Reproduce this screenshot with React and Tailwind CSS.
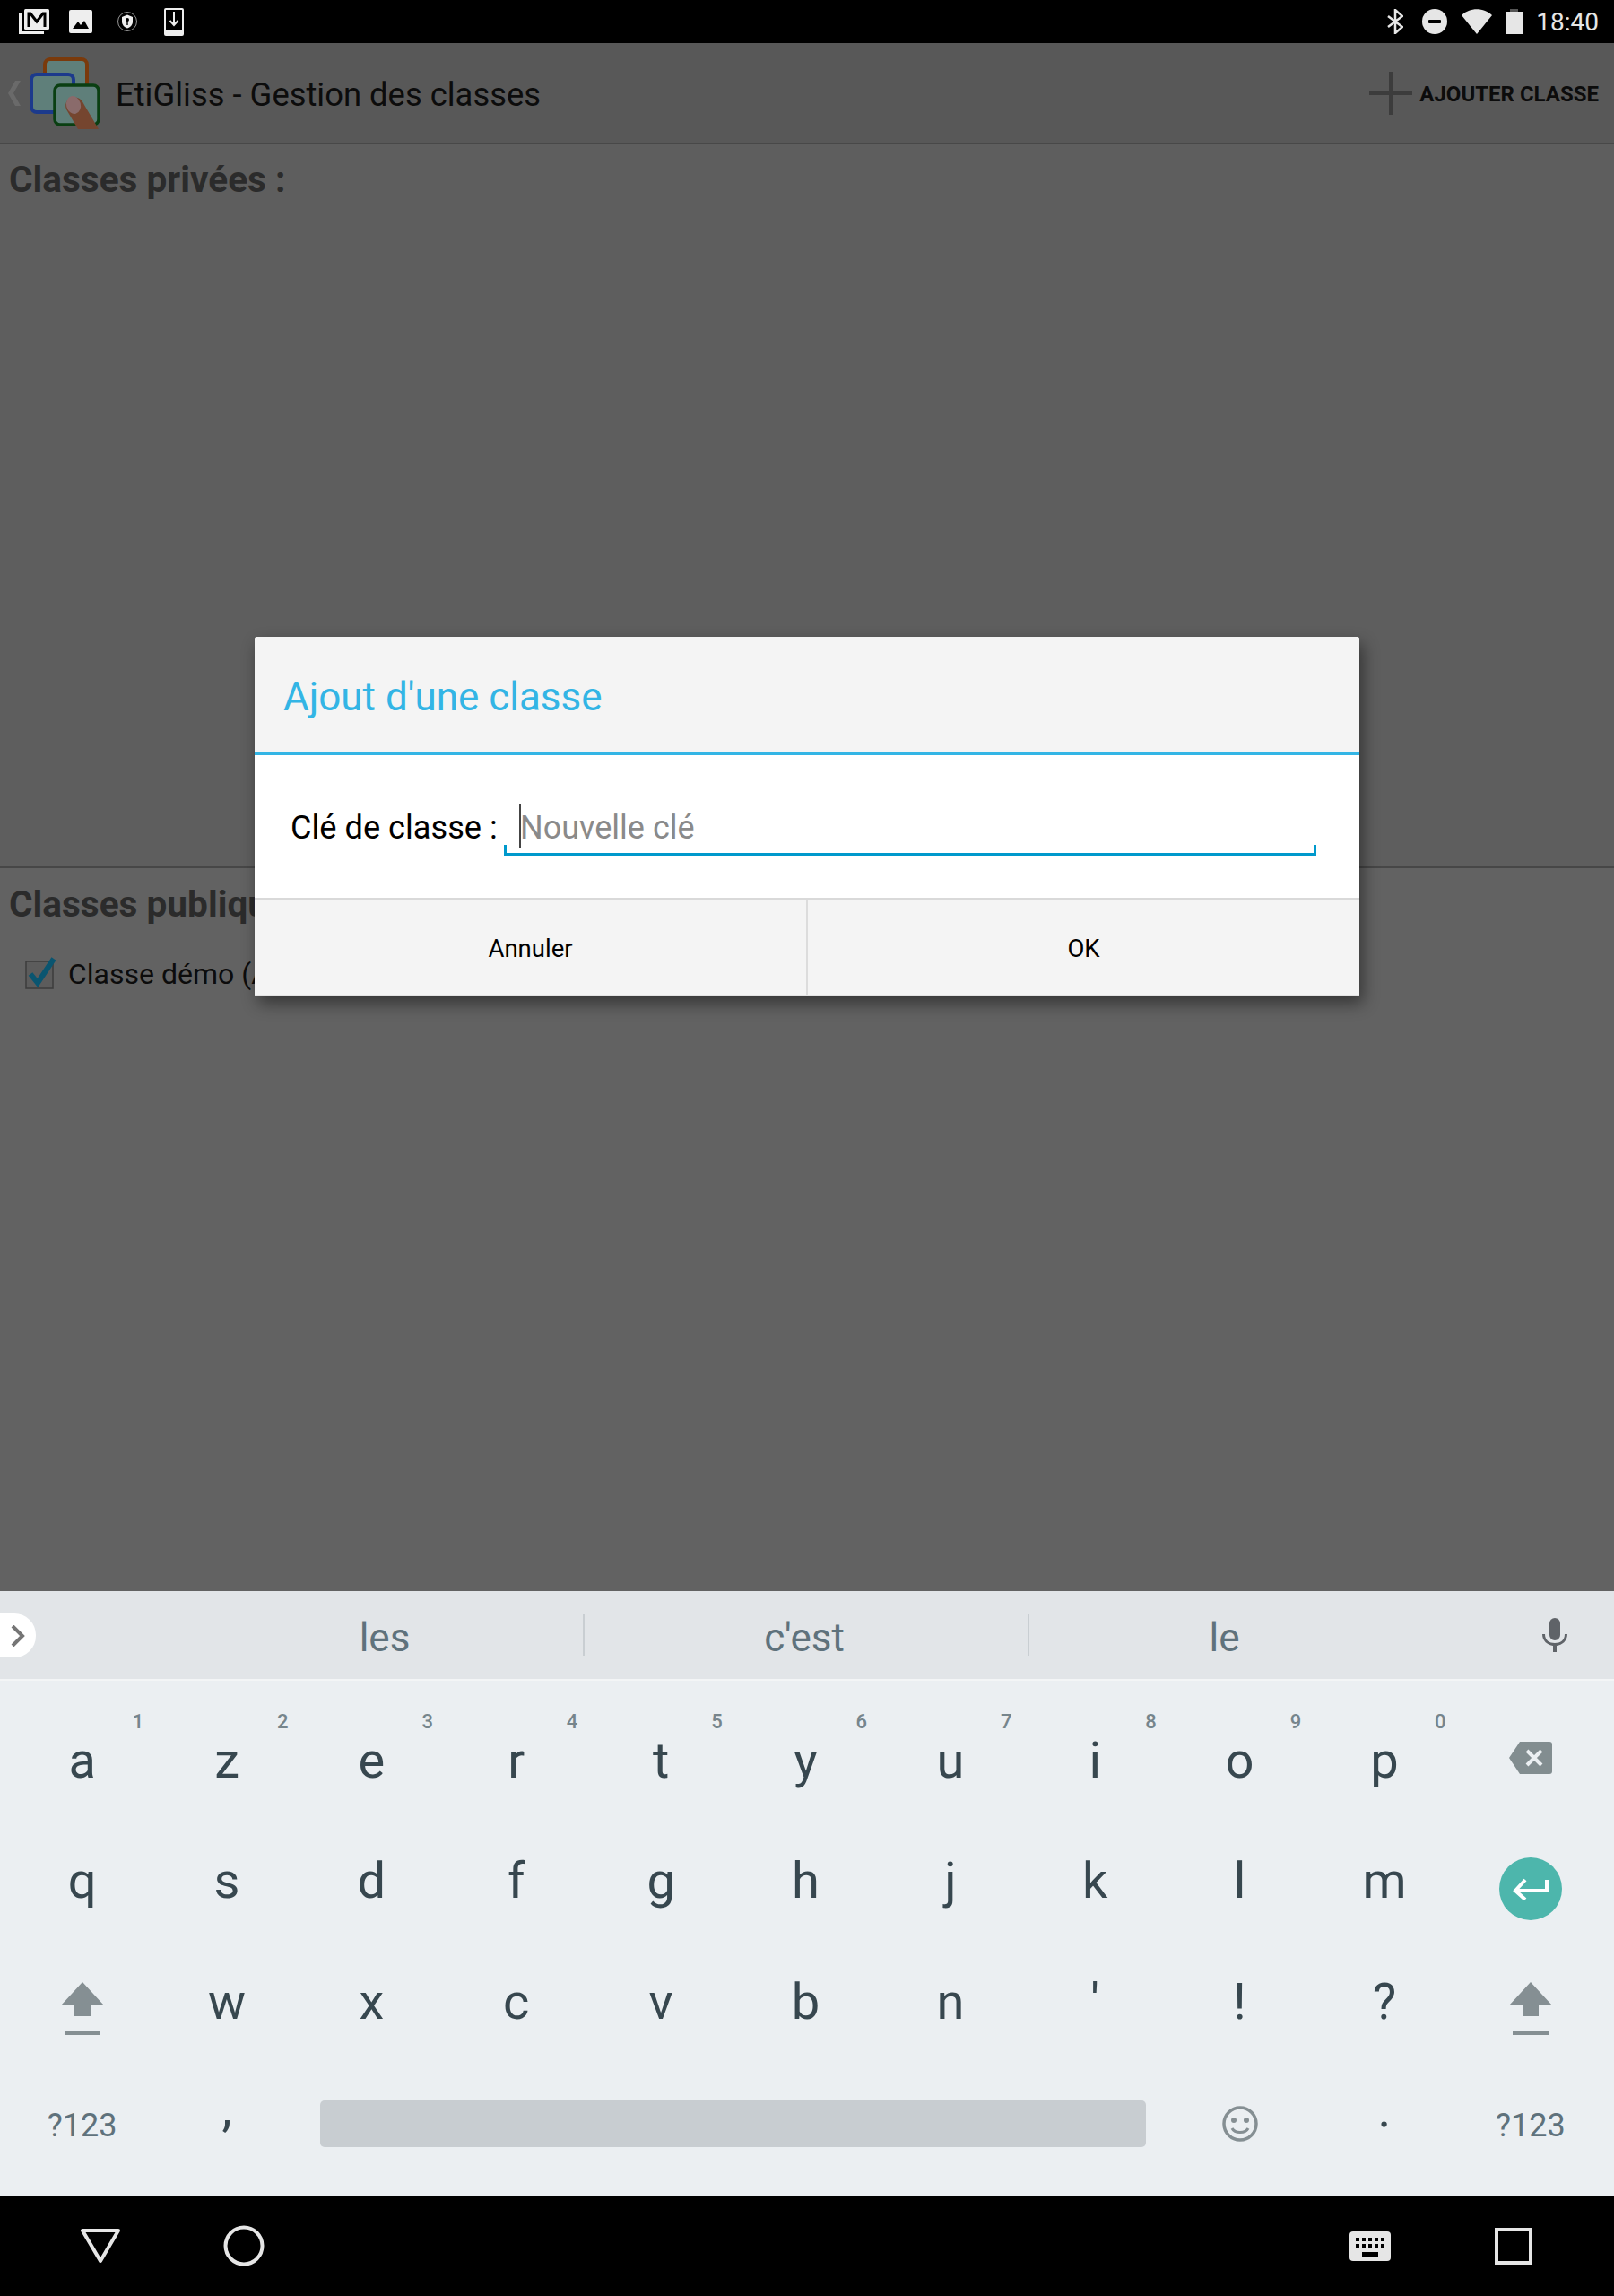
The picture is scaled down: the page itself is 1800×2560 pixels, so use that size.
import React from "react";

const rowOne = [
  ["a", "1"], ["z", "2"], ["e", "3"], ["r", "4"], ["t", "5"],
  ["y", "6"], ["u", "7"], ["i", "8"], ["o", "9"], ["p", "0"],
];
const rowTwo = ["q", "s", "d", "f", "g", "h", "j", "k", "l", "m"];
const rowThree = ["w", "x", "c", "v", "b", "n", "'", "!", "?"];

const Logo = () => (
  <svg width="80" height="80" viewBox="0 0 80 80" className="ml-[9px] mt-[16px] shrink-0">
    <rect x="18" y="2" width="47" height="50" rx="6" fill="#5f7f7a" stroke="#7a3a0c" strokeWidth="4" />
    <rect x="3" y="19" width="47" height="42" rx="6" fill="#5f7f7a" stroke="#1c3a8c" strokeWidth="4" />
    <rect x="29" y="31" width="49" height="44" rx="6" fill="#5f7f7a" stroke="#0a3f12" strokeWidth="3.500" />
    <path d="M42 58 C38 47 50 40 58 47 C60 49 61 51 62 53 L78 80 L55 80 Z" fill="#75452f" />
    <ellipse cx="50" cy="53" rx="8" ry="10" fill="#8a6b6b" transform="rotate(-15 50 53)" />
  </svg>
);

const Shift = () => (
  <svg width="48" height="60" viewBox="0 0 48 60" className="mt-[18px]" fill="#858f93">
    <path d="M24 0 L48 26 L33 26 L33 38 L15 38 L15 26 L0 26 Z" />
    <rect x="4" y="54" width="40" height="5" />
  </svg>
);

const KeyBox = ({ children, hint, className = "" }) => (
  <div className={`relative flex items-center justify-center ${className}`}>
    {children}
    {hint && (
      <span className="absolute left-[133px] top-[11px] w-5 text-center text-[22px] font-medium leading-[26px] text-[#76858c]">
        {hint}
      </span>
    )}
  </div>
);

const Letter = ({ children, className = "" }) => (
  <span className={`text-[56px] leading-none text-[#37474f] ${className}`}>{children}</span>
);

export default function App() {
  return (
    <div className="w-[1800px] h-[2560px] flex flex-col overflow-hidden bg-black font-['Roboto',sans-serif]">
      {/* Status bar */}
      <div className="h-12 shrink-0 bg-black flex items-center justify-between">
        <div className="flex items-center pl-[21px]">
          <svg width="34" height="28" viewBox="0 0 34 28" fill="none">
            <path d="M1.5 5 V26.5 H28" stroke="#eee" strokeWidth="3" />
            <rect x="6" y="0" width="28" height="23" rx="1.5" fill="#eee" />
            <path d="M11 20 V5 H13 L20 14 L27 5 H29 V20" stroke="#000" strokeWidth="3" fill="none" />
          </svg>
          <svg width="26" height="26" viewBox="0 0 26 26" className="ml-[22px]">
            <rect width="26" height="26" rx="2" fill="#eee" />
            <path d="M4 21 L10 13 L13 17 L17 12 L22 21 Z" fill="#000" />
          </svg>
          <svg width="22" height="22" viewBox="0 0 22 22" fill="none" className="ml-[28px]">
            <circle cx="11" cy="11" r="10.500" stroke="#bbb" strokeWidth="0.800" />
            <path d="M11 3.5 L17 6 V11 C17 15 14 17.5 11 18.500 C8 17.5 5 15 5 11 V6 Z" fill="#eee" />
            <circle cx="11" cy="9" r="2" fill="#000" />
            <rect x="10.3" y="10" width="1.400" height="5" fill="#000" />
          </svg>
          <svg width="22" height="31" viewBox="0 0 22 31" fill="none" className="ml-[30px]">
            <rect x="1" y="1" width="20" height="29" rx="1" stroke="#eee" strokeWidth="2" />
            <rect x="1" y="24" width="20" height="6" fill="#eee" />
            <path d="M11 4 V18 M6.5 14 L11 19 L15.500 14" stroke="#eee" strokeWidth="2" />
          </svg>
        </div>
        <div className="flex items-center pr-[17px] text-[#e6e6e6]">
          <svg width="18" height="28" viewBox="0 0 18 28" fill="none" stroke="#e6e6e6" strokeWidth="2.500">
            <path d="M1 8 L17 20 L9 27 V1 L17 8 L1 20" />
          </svg>
          <svg width="28" height="28" viewBox="0 0 28 28" className="ml-[21px]">
            <circle cx="14" cy="14" r="14" fill="#e6e6e6" />
            <rect x="7" y="12" width="14" height="4" rx="1" fill="#000" />
          </svg>
          <svg width="34" height="28" viewBox="0 0 34 28" className="ml-[16px]">
            <path d="M0 7 C9 -2 25 -2 34 7 L17 28 Z" fill="#e6e6e6" />
          </svg>
          <svg width="19" height="28" viewBox="0 0 19 28" className="ml-[15px]">
            <rect x="5" y="0" width="9" height="4" fill="#555" />
            <rect x="0" y="3" width="19" height="25" fill="#e6e6e6" />
          </svg>
          <span className="ml-[15px] mt-[2px] text-[28px] leading-none">18:40</span>
        </div>
      </div>

      {/* App behind the dimmed overlay */}
      <div className="relative h-[1726px] shrink-0 flex flex-col bg-[#626262]">
        <div className="h-[113px] shrink-0 bg-[#585858] border-b-2 border-[#484848] flex items-start">
          <svg width="14" height="28" viewBox="0 0 14 28" className="ml-[9px] mt-[42px] shrink-0" fill="#6a6a6a">
            <path d="M14 0 L6 14 L14 28 L8 28 L0 14 L8 0 Z" />
          </svg>
          <Logo />
          <span className="ml-[17px] mt-[35px] text-[36.4px] leading-[46px] text-[#0c0c0c]">
            EtiGliss - Gestion des classes
          </span>
          <div className="ml-auto flex items-center pr-[17px] h-[112px]">
            <svg width="48" height="48" viewBox="0 0 48 48" fill="#3c3c3c">
              <rect x="22" y="0" width="4" height="48" />
              <rect x="0" y="22" width="48" height="4" />
            </svg>
            <span className="ml-2 mt-[1px] text-[24px] font-bold leading-none text-[#0c0c0c]">AJOUTER CLASSE</span>
          </div>
        </div>

        <div className="h-[807px] shrink-0 border-b-2 border-[#474747] bg-[#5e5e5e] px-[10px] pt-[15px]">
          <h2 className="text-[40.6px] font-bold leading-[48px] text-[#2b2b2b]">Classes privées :</h2>
        </div>

        <div className="flex-1 px-[10px] pt-4">
          <h2 className="text-[40.6px] font-bold leading-[48px] text-[#2b2b2b]">Classes publiques :</h2>
          <div className="flex items-center mt-[34px] ml-[18px]">
            <svg width="36" height="36" viewBox="0 0 36 36" fill="none" className="shrink-0 -mt-[2px]">
              <rect x="1" y="5" width="30" height="30" stroke="#3c3c3c" strokeWidth="1.500" fill="#5c5c5c" />
              <path d="M6 19 L14 29 L32 2" stroke="#0a5570" strokeWidth="6" />
            </svg>
            <span className="ml-[12px] text-[32px] leading-[40px] text-[#0c0c0c]">Classe démo (Admin)</span>
          </div>
        </div>

        {/* Dialog */}
        <div className="absolute left-[284px] top-[662px] w-[1232px] h-[401px] flex flex-col rounded-[3px] overflow-hidden bg-white shadow-[4px_8px_18px_rgba(0,0,0,0.45)]">
          <div className="h-[128px] shrink-0 bg-[#f4f4f4] pl-8 pt-[41px]">
            <span className="text-[44px] leading-[52px] text-[#33b5e5]">Ajout d'une classe</span>
          </div>
          <div className="h-1 shrink-0 bg-[#33b5e5]" />
          <div className="h-[159px] shrink-0 flex items-start pl-[40px]">
            <span className="w-[238px] shrink-0 mt-[59px] text-[36.2px] leading-[44px] text-black">Clé de classe :</span>
            <div className="relative mt-[103px] w-[906px] h-[9px] border-b-[3px] border-[#0099cc]">
              <div className="absolute left-0 bottom-0 w-[3px] h-[9px] bg-[#0099cc]" />
              <div className="absolute right-0 bottom-0 w-[3px] h-[9px] bg-[#0099cc]" />
              <div className="absolute left-[17px] bottom-[6px] w-[2px] h-[49px] bg-[#444]" />
              <input
                readOnly
                placeholder="Nouvelle clé"
                className="absolute left-[18px] bottom-[6px] w-[600px] h-[44px] bg-transparent outline-none text-[36px] placeholder:text-[#8a8a8a]"
              />
            </div>
          </div>
          <div className="flex-1 flex bg-[#f4f4f4] border-t-2 border-[#d9d9d9] border-b-2 border-b-[#e4e4e4] text-[27.5px] text-black">
            <div className="w-[617px] pt-[4px] flex items-center justify-center border-r-2 border-[#dcdcdc]">Annuler</div>
            <div className="flex-1 pt-[4px] flex items-center justify-center">OK</div>
          </div>
        </div>
      </div>

      {/* Keyboard */}
      <div className="h-[100px] shrink-0 bg-[#e2e5e8] border-b-2 border-[#f3f5f6] flex items-center relative">
        <div className="absolute left-0 top-[25px] w-10 h-[49px] rounded-r-[24px] bg-white flex items-center justify-center">
          <svg width="16" height="24" viewBox="0 0 16 24" fill="none" stroke="#757575" strokeWidth="4">
            <path d="M2 1 L13 12 L2 23" />
          </svg>
        </div>
        <div className="w-[650px] text-center pl-[208px] pt-[6px] text-[44px] leading-none text-[#5f727c]">les</div>
        <div className="w-0.5 h-[46px] bg-[#c9ced2]" />
        <div className="w-[494px] text-center pr-[4px] pt-[6px] text-[44px] leading-none text-[#5f727c]">c'est</div>
        <div className="w-0.5 h-[46px] bg-[#c9ced2]" />
        <div className="w-[438px] text-center pr-[3px] pt-[6px] text-[44px] leading-none text-[#5f727c]">le</div>
        <svg width="28" height="38" viewBox="0 0 28 38" className="ml-[134px]" fill="#5f6368">
          <rect x="8" y="0" width="12" height="25" rx="6" />
          <path d="M0 18 H3 C3 25 8 28 14 28 C20 28 25 25 25 18 H28 C28 26 22 30 16 31 V38 H12 V31 C6 30 0 26 0 18 Z" />
        </svg>
      </div>
      <div className="h-[574px] shrink-0 bg-[#ebeff2] pl-[11px] pr-[14px] pt-[22px]">
        <div className="grid grid-cols-11 auto-rows-[134px]">
          {rowOne.map(([letter, hint]) => (
            <KeyBox key={letter} hint={hint}>
              <Letter>{letter}</Letter>
            </KeyBox>
          ))}
          <KeyBox className="pl-[3px]">
            <svg width="48" height="36" viewBox="0 0 48 36" className="-mt-[6px]">
              <path d="M12 0 H45 A3 3 0 0 1 48 3 V33 A3 3 0 0 1 45 36 H12 L0 18 Z" fill="#828d90" />
              <path d="M20 10 L36 26 M36 10 L20 26" stroke="#ebeff2" strokeWidth="4" />
            </svg>
          </KeyBox>

          {rowTwo.map((letter) => (
            <KeyBox key={letter}>
              <Letter>{letter}</Letter>
            </KeyBox>
          ))}
          <KeyBox className="pl-[3px]">
            <div className="mt-[18px] w-[70px] h-[70px] rounded-full bg-[#4db6ac] flex items-center justify-center">
              <svg width="40" height="26" viewBox="0 0 40 26" fill="none" stroke="#fff" strokeWidth="4">
                <path d="M38 3 V15 H4 M14 3 L3 15 L14 25" />
              </svg>
            </div>
          </KeyBox>

          <KeyBox>
            <Shift />
          </KeyBox>
          {rowThree.map((letter) => (
            <KeyBox key={letter}>
              <Letter className="mt-[2px]">{letter}</Letter>
            </KeyBox>
          ))}
          <KeyBox className="pl-[3px]">
            <Shift />
          </KeyBox>

          <KeyBox>
            <span className="mt-[9px] text-[36px] text-[#5f727c]">?123</span>
          </KeyBox>
          <KeyBox>
            <Letter className="-mt-[28px]">,</Letter>
          </KeyBox>
          <KeyBox className="col-span-6">
            <div className="mt-[6px] w-[921px] h-[52px] rounded-[5px] bg-[#c8cdd1]" />
          </KeyBox>
          <KeyBox>
            <svg width="40" height="40" viewBox="0 0 40 40" fill="none" className="mt-[6px]">
              <circle cx="20" cy="20" r="18" stroke="#858f93" strokeWidth="3.500" />
              <circle cx="13" cy="16" r="3" fill="#858f93" />
              <circle cx="27" cy="16" r="3" fill="#858f93" />
              <path d="M11 25 C14 31 26 31 29 25" stroke="#858f93" strokeWidth="3" />
            </svg>
          </KeyBox>
          <KeyBox>
            <Letter className="-mt-[26px]">.</Letter>
          </KeyBox>
          <KeyBox className="pl-[3px]">
            <span className="mt-[9px] text-[36px] text-[#5f727c]">?123</span>
          </KeyBox>
        </div>
      </div>

      {/* Navigation bar */}
      <div className="h-[112px] shrink-0 bg-black flex items-center">
        <svg width="46" height="40" viewBox="0 0 46 40" fill="none" className="ml-[89px]">
          <path d="M3 3 H43 L23 37 Z" stroke="#e6e6e6" strokeWidth="4" strokeLinejoin="round" />
        </svg>
        <svg width="46" height="46" viewBox="0 0 46 46" fill="none" className="ml-[114px]">
          <circle cx="23" cy="23" r="20.500" stroke="#e6e6e6" strokeWidth="4" />
        </svg>
        <svg width="46" height="33" viewBox="0 0 46 33" className="ml-[1210px]">
          <rect width="46" height="33" rx="4" fill="#e6e6e6" />
          <path d="M7 7 H11 V11 H7 Z M14 7 H18 V11 H14 Z M21 7 H25 V11 H21 Z M28 7 H32 V11 H28 Z M35 7 H39 V11 H35 Z M7 14 H11 V18 H7 Z M14 14 H18 V18 H14 Z M21 14 H25 V18 H21 Z M28 14 H32 V18 H28 Z M35 14 H39 V18 H35 Z M14 23 H32 V28 H14 Z" fill="#000" />
        </svg>
        <svg width="42" height="41" viewBox="0 0 42 41" fill="none" className="ml-[116px]">
          <rect x="2" y="2" width="38" height="37" stroke="#e6e6e6" strokeWidth="4" />
        </svg>
      </div>
    </div>
  );
}
